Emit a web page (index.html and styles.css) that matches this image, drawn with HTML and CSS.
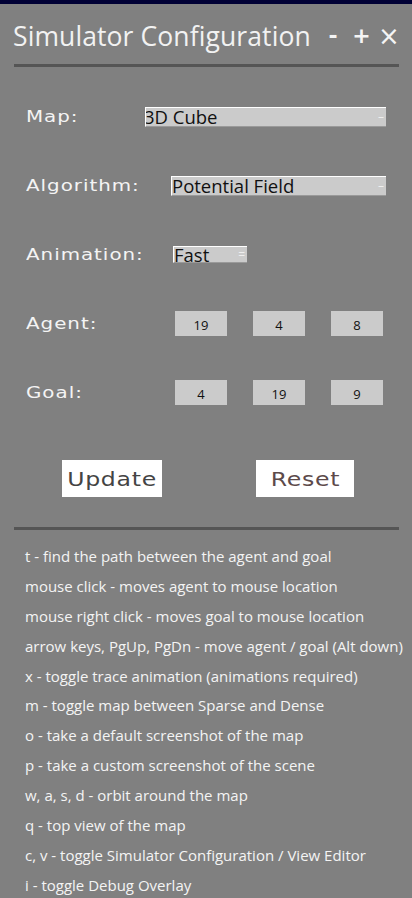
FILE: index.html
```html
<!DOCTYPE html>
<html>
<head>
<meta charset="utf-8">
<link rel="stylesheet" href="styles.css">
</head>
<body>
<div class="topbar"></div>
<div class="panel">
  <div class="header">
    <div class="title">Simulator Configuration</div>
    <div class="controls">
      <span class="ctl minus">-</span>
      <span class="ctl plus">+</span>
      <span class="ctl close">×</span>
    </div>
  </div>
  <div class="rule"></div>
  <div class="form">
    <div class="row">
      <div class="label"><span class="wide">Map:</span></div>
      <div class="select sel-map"><span class="sel-text cut">3D Cube</span><span class="arrow">–</span></div>
    </div>
    <div class="row">
      <div class="label"><span class="wide">Algorithm:</span></div>
      <div class="select sel-alg"><span class="sel-text">Potential Field</span><span class="arrow">–</span></div>
    </div>
    <div class="row">
      <div class="label"><span class="wide">Animation:</span></div>
      <div class="select sel-anim"><span class="sel-text">Fast</span><span class="arrow">=</span></div>
    </div>
    <div class="row">
      <div class="label"><span class="wide">Agent:</span></div>
      <div class="nums">
        <div class="num">19</div>
        <div class="num">4</div>
        <div class="num">8</div>
      </div>
    </div>
    <div class="row">
      <div class="label"><span class="wide">Goal:</span></div>
      <div class="nums">
        <div class="num">4</div>
        <div class="num">19</div>
        <div class="num">9</div>
      </div>
    </div>
  </div>
  <div class="buttons">
    <div class="btn update"><span class="btn-text">Update</span></div>
    <div class="btn reset"><span class="btn-text">Reset</span></div>
  </div>
  <div class="rule rule2"></div>
  <ul class="help">
    <li>t - find the path between the agent and goal</li>
    <li>mouse click - moves agent to mouse location</li>
    <li>mouse right click - moves goal to mouse location</li>
    <li>arrow keys, PgUp, PgDn - move agent / goal (Alt down)</li>
    <li>x - toggle trace animation (animations required)</li>
    <li>m - toggle map between Sparse and Dense</li>
    <li>o - take a default screenshot of the map</li>
    <li>p - take a custom screenshot of the scene</li>
    <li>w, a, s, d - orbit around the map</li>
    <li>q - top view of the map</li>
    <li>c, v - toggle Simulator Configuration / View Editor</li>
    <li>i - toggle Debug Overlay</li>
  </ul>
</div>
</body>
</html>
```

FILE: styles.css
```css
html, body {
  margin: 0;
  padding: 0;
  background: #808080;
  width: 412px;
  height: 898px;
  overflow: hidden;
}
.topbar {
  height: 4px;
  background: #000035;
}
.panel {
  padding: 0 13px 0 14px;
}
.header {
  display: flex;
  align-items: center;
  justify-content: space-between;
  height: 60px;
  padding-top: 3px;
  box-sizing: border-box;
}
.title {
  font-family: "Open Sans", sans-serif;
  font-size: 26.5px;
  color: #f2f2f2;
  margin-left: -1px;
  letter-spacing: 0.1px;
  white-space: nowrap;
}
.controls {
  display: flex;
  align-items: center;
  font-family: "DejaVu Sans", sans-serif;
  font-weight: bold;
  color: #f4f4f4;
  font-size: 22px;
  margin-right: 2px;
  flex: none;
}
.ctl {
  display: inline-flex;
  justify-content: center;
  overflow: visible;
}
.minus { width: 8px; margin-right: 18px; }
.plus { width: 13px; margin-right: 13px; }
.close { width: 16px; font-size: 26px; font-weight: normal; }
.rule {
  height: 3px;
  background: #555555;
}
.form {
  padding-top: 15px;
}
.row {
  display: flex;
  align-items: center;
  height: 69px;
}
.label {
  font-family: "DejaVu Sans", sans-serif;
  font-size: 16px;
  color: #f4f4f4;
  margin-left: 12px;
  width: 119px;
  flex: none;
  white-space: nowrap;
}
.wide {
  display: inline-block;
  letter-spacing: 0.8px;
  transform: scaleX(1.24);
  transform-origin: left center;
}
.select {
  height: 20px;
  background: #cbcbcb;
  border-top: 1px solid #ffffff;
  border-left: 1px solid #ffffff;
  border-bottom: 1px solid #9a9a9a;
  display: flex;
  align-items: center;
  justify-content: space-between;
  overflow-x: clip;
  overflow-y: visible;
  box-sizing: border-box;
  font-family: "Open Sans", sans-serif;
  font-size: 18.5px;
  color: #111;
  flex: none;
}
.sel-text {
  white-space: nowrap;
  line-height: 18px;
}
.sel-text.cut { margin-left: -2px; }
.arrow {
  color: #eeeeee;
  font-size: 12px;
  margin-right: 2px;
}
.sel-map { width: 241px; }
.sel-alg { width: 215px; margin-left: 26px; }
.sel-anim { width: 74px; margin-left: 28px; height: 17px; }
.nums {
  display: flex;
  gap: 26px;
  margin-left: 30px;
}
.num {
  width: 52px;
  height: 25px;
  background: #cbcbcb;
  display: flex;
  align-items: center;
  justify-content: center;
  font-family: "Open Sans", sans-serif;
  font-size: 13px;
  color: #111;
  padding-top: 2px;
  box-sizing: border-box;
}
.buttons {
  display: flex;
  padding-top: 33px;
  margin-left: 48px;
  gap: 94px;
}
.btn {
  height: 37px;
  background: #ffffff;
  display: flex;
  align-items: center;
  justify-content: center;
  font-family: "DejaVu Sans", sans-serif;
  font-size: 20px;
}
.btn-text {
  display: inline-block;
  letter-spacing: 0.6px;
  transform: scaleX(1.18);
}
.update { width: 100px; color: #444444; }
.reset { width: 98px; color: #5c4a4a; }
.rule2 {
  margin-top: 30px;
}
.help {
  list-style: none;
  margin: 12px 0 0 11px;
  padding: 0;
  font-family: "Open Sans", sans-serif;
  font-size: 15px;
  color: #f4f4f4;
}
.help li {
  height: 29.9px;
  line-height: 29.9px;
  white-space: nowrap;
}
```
